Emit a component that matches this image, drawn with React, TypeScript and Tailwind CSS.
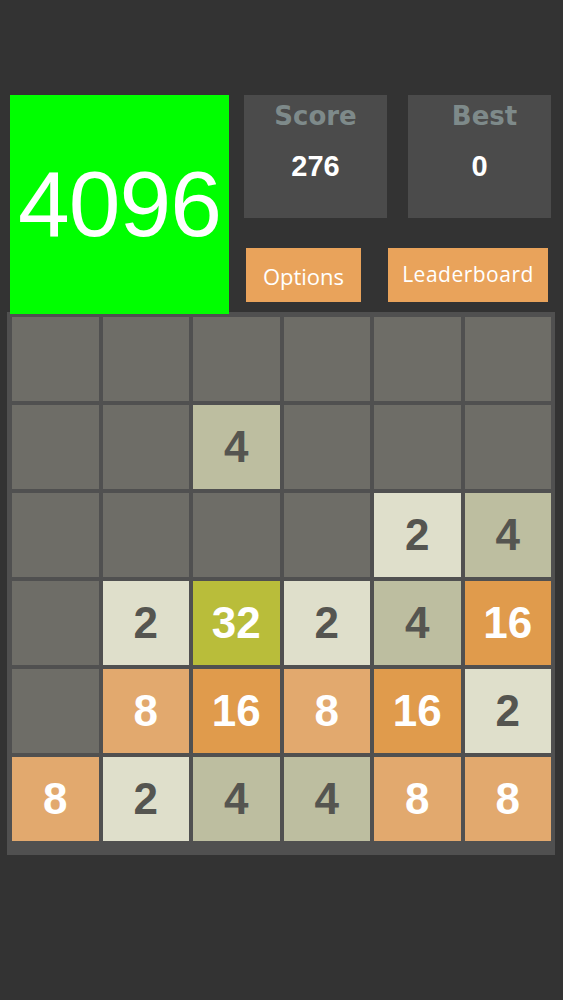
import React from "react";

const board: (number | null)[][] = [
  [null, null, null, null, null, null],
  [null, null, 4, null, null, null],
  [null, null, null, null, 2, 4],
  [null, 2, 32, 2, 4, 16],
  [null, 8, 16, 8, 16, 2],
  [8, 2, 4, 4, 8, 8],
];

function tileClass(v: number | null): string {
  switch (v) {
    case 2:
      return "bg-[#dfdfcb] text-[#555550]";
    case 4:
      return "bg-[#bdbea0] text-[#555550]";
    case 8:
      return "bg-[#e2a96e] text-white";
    case 16:
      return "bg-[#e09b4c] text-white";
    case 32:
      return "bg-[#b9bd3a] text-white";
    default:
      return "bg-[#6e6d67]";
  }
}

export default function App() {
  return (
    <div className="w-[563px] h-[1000px] bg-[#333333] pt-[95px]" style={{ fontFamily: '"Liberation Sans", Arial, sans-serif' }}>
      <div className="flex h-[217px]">
        <div className="relative z-10 ml-[10px] w-[219px] h-[219px] bg-[#00ff00] flex items-center justify-center">
          <span className="text-white text-[93px] leading-none tracking-[-1px]" style={{ fontFamily: '"Liberation Sans", Arial, sans-serif' }}>
            4096
          </span>
        </div>
        <div className="flex flex-col ml-[15px]">
          <div className="flex gap-[21px]">
            <div className="w-[143px] h-[123px] bg-[#4b4b4b] flex flex-col items-center">
              <span className="mt-[5px] text-[26px] font-bold text-[#7e8a8a] leading-[32px]" style={{ fontFamily: '"DejaVu Sans", sans-serif' }}>
                Score
              </span>
              <span className="mt-[18px] text-[29px] font-bold text-white leading-[32px]">276</span>
            </div>
            <div className="w-[143px] h-[123px] bg-[#4b4b4b] flex flex-col items-center">
              <span className="mt-[5px] pl-[10px] text-[26px] font-bold text-[#7e8a8a] leading-[32px]" style={{ fontFamily: '"DejaVu Sans", sans-serif' }}>
                Best
              </span>
              <span className="mt-[18px] text-[29px] font-bold text-white leading-[32px]">0</span>
            </div>
          </div>
          <div className="flex mt-[30px]">
            <div className="ml-[2px] w-[115px] h-[54px] bg-[#e9a35b] flex items-center justify-center">
              <span className="text-white text-[22px] pt-[3px]" style={{ fontFamily: '"Open Sans", sans-serif' }}>
                Options
              </span>
            </div>
            <div className="ml-[27px] w-[160px] h-[54px] bg-[#e9a35b] flex items-center justify-center">
              <span className="text-white text-[21px] tracking-[0.5px]" style={{ fontFamily: '"Open Sans", sans-serif' }}>
                Leaderboard
              </span>
            </div>
          </div>
        </div>
      </div>
      <div className="ml-[7px] w-[548px] bg-[#505050] pt-[5px] pl-[5px] pr-[4px] pb-[14px]">
        <div className="grid grid-cols-6 gap-[4px]">
          {board.flat().map((v, i) => (
            <div key={i} className={`h-[84px] flex items-center justify-center ${tileClass(v)}`}>
              {v !== null && (
                <span className="text-[44px] font-bold leading-none">{v}</span>
              )}
            </div>
          ))}
        </div>
      </div>
    </div>
  );
}
